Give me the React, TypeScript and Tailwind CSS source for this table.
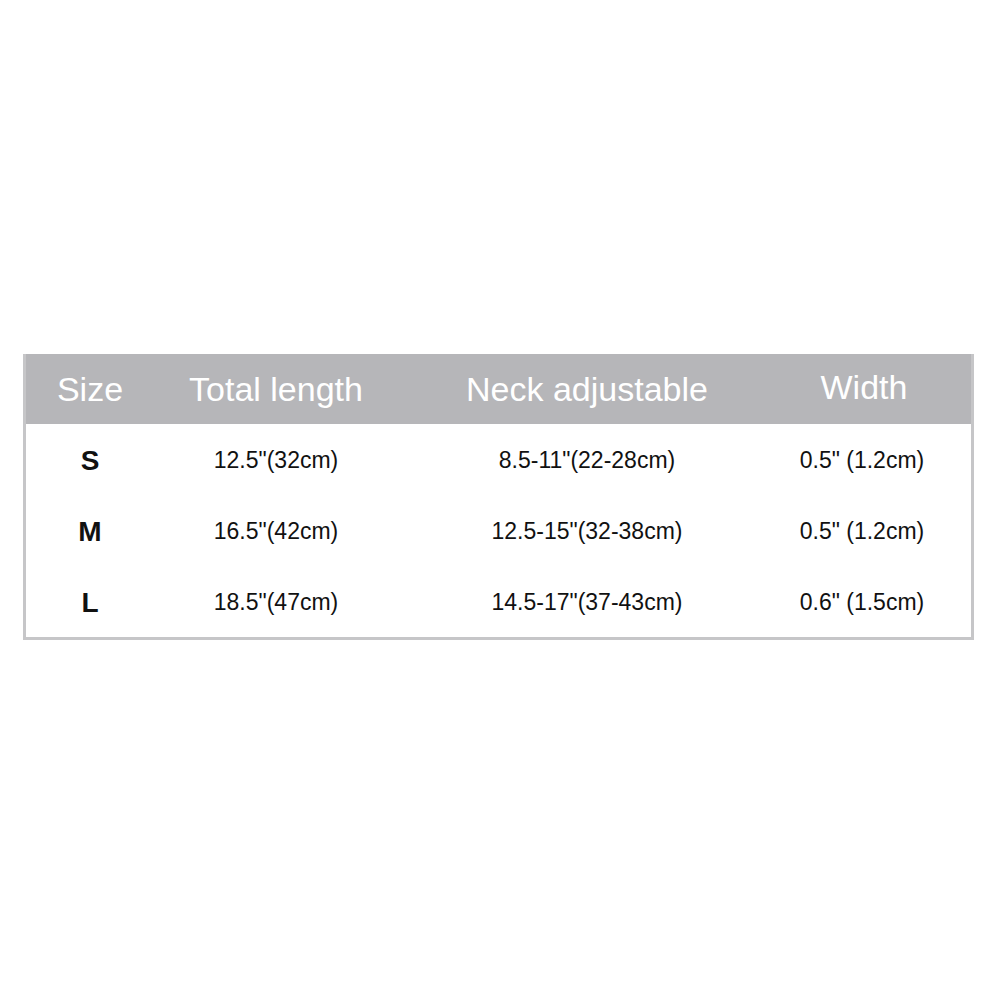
const rows = [
  { size: "S", length: '12.5"(32cm)', neck: '8.5-11"(22-28cm)', width: '0.5" (1.2cm)' },
  { size: "M", length: '16.5"(42cm)', neck: '12.5-15"(32-38cm)', width: '0.5" (1.2cm)' },
  { size: "L", length: '18.5"(47cm)', neck: '14.5-17"(37-43cm)', width: '0.6" (1.5cm)' },
];

const cols = "grid grid-cols-[128px_244px_378px_172px]";

export default function App() {
  return (
    <div className="min-h-screen bg-white pt-[354px] pl-[23px] font-['Liberation_Sans',Arial,sans-serif]">
      <div className="w-[951px] border-[3px] border-t-0 border-[#c6c6c8]">
        <div className={`${cols} h-[70px] items-center bg-[#b6b6b9] text-[34px] text-white`}>
          <div className="text-center">Size</div>
          <div className="text-center">Total length</div>
          <div className="text-center">Neck adjustable</div>
          <div className="-mt-1 pl-1 text-center">Width</div>
        </div>
        {rows.map((r) => (
          <div key={r.size} className={`${cols} h-[71px] items-center pt-[2px] text-[23px] text-[#111]`}>
            <div className="text-center text-[28px] font-bold">{r.size}</div>
            <div className="text-center">{r.length}</div>
            <div className="text-center">{r.neck}</div>
            <div className="text-center">{r.width}</div>
          </div>
        ))}
      </div>
    </div>
  );
}
